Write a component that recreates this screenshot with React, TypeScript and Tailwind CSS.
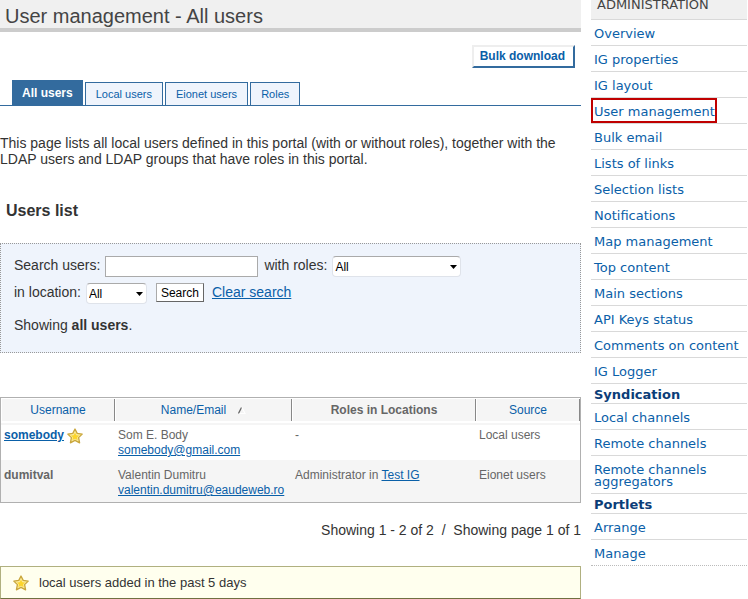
import React from "react";

const adminLinks = [
  "Overview",
  "IG properties",
  "IG layout",
  "User management",
  "Bulk email",
  "Lists of links",
  "Selection lists",
  "Notifications",
  "Map management",
  "Top content",
  "Main sections",
  "API Keys status",
  "Comments on content",
  "IG Logger",
];
const syndicationLinks = ["Local channels", "Remote channels", "Remote channels aggregators"];
const portletLinks = ["Arrange", "Manage"];

function Star() {
  return (
    <svg width="16" height="16" viewBox="0 0 16 16" className="inline-block shrink-0" aria-hidden="true">
      <path
        d="M8 1 L10.2 5.4 L15.2 6.1 L11.6 9.6 L12.6 14.8 L8 12.4 L3.4 14.8 L4.4 9.6 L0.8 6.1 L5.8 5.4 Z"
        fill="#fbeb9a"
        stroke="#c9a63c"
        strokeWidth="1.3"
        strokeLinejoin="round"
      />
      <path d="M8 4.6 L9.3 7.2 L12 7.6 L10 9.4 L10.6 12 L8 10.7 L5.4 12 L6 9.4 L4 7.6 L6.7 7.2 Z" fill="#fcd52c" />
    </svg>
  );
}

function NavItem({ label }: { label: string }) {
  const current = label === "User management";
  const line = label === "Manage" ? "border-dotted border-[#bbbbbb]" : "border-[#d9d9d9]";
  return (
    <li className={"relative border-b pt-2 pb-[5px] pl-[3px] " + line}>
      <a href="#" className="block text-[#0a60a8]" aria-current={current ? "page" : undefined}>
        {label}
      </a>
      {current && <span className="pointer-events-none absolute top-0 left-0 h-[25px] w-[126px] border-2 border-[#c00000]" />}
    </li>
  );
}

function NavHeading({ children }: { children: React.ReactNode }) {
  return <h3 className="border-b border-[#d9d9d9] pt-[5px] pb-0.5 pl-[3px] font-bold text-[#0b3d78]">{children}</h3>;
}

function Tab({ label }: { label: string }) {
  return (
    <a href="#" className="h-[23px] border border-b-0 border-[#336b9e] bg-[#eff4fc] px-2.5 text-[11px] leading-[23px] text-[#0a60a8]">
      {label}
    </a>
  );
}

function Picker({ id, className }: { id: string; className: string }) {
  return (
    <span className={"relative inline-flex " + className}>
      <select
        id={id}
        className="h-[21px] w-full appearance-none rounded-sm border border-[#dfe3ea] border-t-[#aaaaaa] bg-white pl-0.5 text-[12px] text-black"
      >
        <option>All</option>
      </select>
      <svg width="7" height="4" viewBox="0 0 7 4" className="pointer-events-none absolute top-[9px] right-1" aria-hidden="true">
        <path d="M0 0 H7 L3.5 4 Z" fill="#000" />
      </svg>
    </span>
  );
}

function HeadCell({ children }: { children: React.ReactNode }) {
  return (
    <th className="bg-white pt-px pb-0.5 font-normal">
      <div className="border-r border-l border-r-[#888888] border-l-white bg-[#f5f5f5] pt-1 pb-[3px]">{children}</div>
    </th>
  );
}

export default function App() {
  return (
    <div className="flex gap-2.5 bg-white pr-px font-['Liberation_Sans',Arial,sans-serif] text-[14px] leading-4 text-[#333333]">
      <main className="min-w-0 flex-1">
        <h1 className="border-b-4 border-[#cccccc] bg-[#f0f0f0] pt-1 pl-[5px] text-[20px] leading-6 text-[#444444]">
          User management - All users
        </h1>

        <div className="flex justify-end pt-[13px] pr-1.5">
          <button className="h-[23px] border-2 border-[#eeeeee] border-r-[#336b9e] border-b-[#336b9e] bg-white pr-2 pl-1.5 text-[12px] leading-[19px] font-bold text-[#0a60a8]">
            Bulk download
          </button>
        </div>

        <nav className="mt-3 flex items-end gap-0.5 border-b border-[#336b9e] pl-3 whitespace-nowrap">
          <a href="#" className="h-[25px] bg-[#336b9e] px-2.5 text-[12px] leading-[26px] font-bold text-white">
            All users
          </a>
          <Tab label="Local users" />
          <Tab label="Eionet users" />
          <Tab label="Roles" />
        </nav>

        <p className="mt-[29px]">
          This page lists all local users defined in this portal (with or without roles), together with the LDAP users and LDAP
          groups that have roles in this portal.
        </p>

        <h2 className="mt-[34px] ml-1.5 text-[16px] leading-5 font-bold">Users list</h2>

        <form className="mt-[22px] border border-dotted border-[#999999] bg-[#eff4fc] px-[13px] pt-3 pb-[19px]" onSubmit={(e) => e.preventDefault()}>
          <div className="flex items-start leading-[18px]">
            <label htmlFor="search">Search users:</label>
            <input id="search" type="text" className="ml-[5px] h-[21px] w-[153px] border border-[#aaaaaa] bg-white px-1" />
            <label htmlFor="roles" className="ml-1.5">
              with roles:
            </label>
            <Picker id="roles" className="ml-[5px] w-[129px]" />
          </div>
          <div className="mt-1.5 flex items-start leading-[18px]">
            <label htmlFor="location">in location:</label>
            <Picker id="location" className="ml-[5px] w-[61px]" />
            <button className="ml-[9px] h-[19px] border border-[#aaaaaa] border-r-[#666666] border-b-[#666666] bg-white px-1 text-[12px] leading-4 text-black">
              Search
            </button>
            <a href="#" className="ml-2 text-[#0a60a8] underline">
              Clear search
            </a>
          </div>
          <p className="mt-[13px]">
            Showing <strong>all users</strong>.
          </p>
        </form>

        <table className="mt-11 w-full table-fixed border-separate border-spacing-0 border border-[#b0b0b0] text-left text-[12px] leading-[15px] text-[#666666]">
          <colgroup>
            <col className="w-[114px]" />
            <col className="w-[177px]" />
            <col className="w-[184px]" />
            <col />
          </colgroup>
          <thead className="text-center">
            <tr>
              <HeadCell>
                <a href="#" className="text-[#0a60a8]">
                  Username
                </a>
              </HeadCell>
              <HeadCell>
                <a href="#" className="text-[#0a60a8]">
                  Name/Email
                </a>
                <svg width="8" height="7" viewBox="0 0 8 7" className="ml-3 inline-block" aria-hidden="true">
                  <path d="M0.5 6.5 L3.5 0.5" stroke="#666" strokeWidth="1.3" fill="none" />
                  <path d="M4 0.5 L7 6.5 H1.5" stroke="#fff" strokeWidth="1.2" fill="none" />
                </svg>
              </HeadCell>
              <HeadCell>
                <span className="font-bold">Roles in Locations</span>
              </HeadCell>
              <HeadCell>
                <a href="#" className="text-[#0a60a8]">
                  Source
                </a>
              </HeadCell>
            </tr>
          </thead>
          <tbody className="align-top">
            <tr className="*:border-t-2 *:border-[#f5f5f5] *:pt-[3px] *:pb-0.5 *:pl-[3px]">
              <td className="font-bold">
                <span className="flex h-[15px] items-center gap-[3px]">
                  <a href="#" className="text-[#0a60a8] underline">
                    somebody
                  </a>
                  <Star />
                </span>
              </td>
              <td>
                Som E. Body
                <br />
                <a href="#" className="text-[#0a60a8] underline">
                  somebody@gmail.com
                </a>
              </td>
              <td>-</td>
              <td>Local users</td>
            </tr>
            <tr className="bg-[#f5f5f5] *:pt-2 *:pb-1 *:pl-[3px]">
              <td className="font-bold">dumitval</td>
              <td>
                Valentin Dumitru
                <br />
                <a href="#" className="text-[#0a60a8] underline">
                  valentin.dumitru@eaudeweb.ro
                </a>
              </td>
              <td>
                Administrator in{" "}
                <a href="#" className="text-[#0a60a8] underline">
                  Test IG
                </a>
              </td>
              <td>Eionet users</td>
            </tr>
          </tbody>
        </table>

        <p className="mt-[19px] text-right">Showing 1 - 2 of 2&nbsp; /&nbsp; Showing page 1 of 1</p>

        <p className="mt-7 flex items-center gap-2.5 border border-[#b0b080] border-b-[#707040] bg-[#ffffee] pt-2 pb-[7px] pl-3 text-[13px]">
          <Star />
          local users added in the past 5 days
        </p>
      </main>

      <aside className="w-[156px] shrink-0 font-['DejaVu_Sans',Verdana,sans-serif] text-[13px] leading-3">
        <h2 className="border-b border-[#d9d9d9] bg-[#f0f0f0] pb-[9px] pl-1.5 leading-2.5 text-[#444444]">ADMINISTRATION</h2>
        <ul>
          {adminLinks.map((l) => (
            <NavItem key={l} label={l} />
          ))}
        </ul>
        <NavHeading>Syndication</NavHeading>
        <ul>
          {syndicationLinks.map((l) => (
            <NavItem key={l} label={l} />
          ))}
        </ul>
        <NavHeading>Portlets</NavHeading>
        <ul>
          {portletLinks.map((l) => (
            <NavItem key={l} label={l} />
          ))}
        </ul>
      </aside>
    </div>
  );
}
